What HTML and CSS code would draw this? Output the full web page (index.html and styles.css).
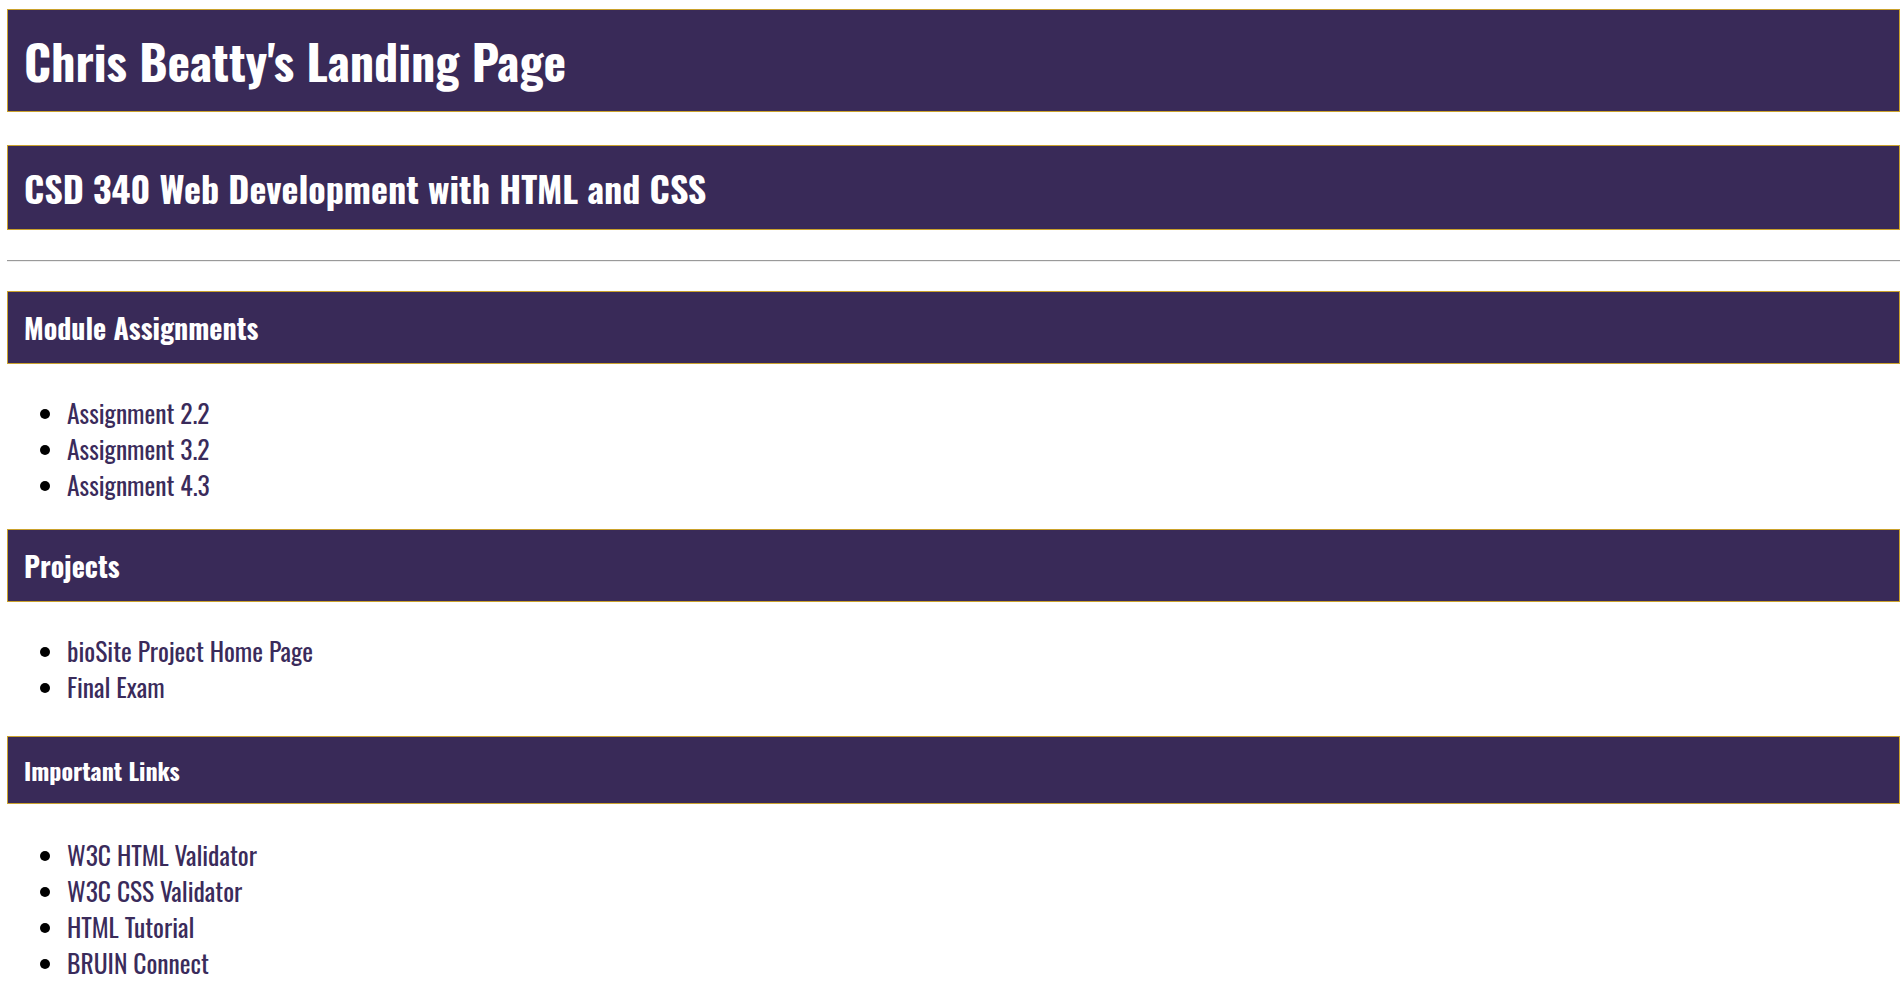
FILE: index.html
```html
<!DOCTYPE html>
<html lang="en">
<head>
<meta charset="utf-8">
<title>Chris Beatty's Landing Page</title>
<link rel="stylesheet" href="styles.css">
</head>
<body>
<header>
  <h1 class="banner banner-xl">Chris Beatty's Landing Page</h1>
  <h2 class="banner banner-lg">CSD 340 Web Development with HTML and CSS</h2>
</header>
<hr class="divider">
<main>
  <section class="group">
    <h3 class="banner banner-md">Module Assignments</h3>
    <ul class="links">
      <li><a href="#">Assignment 2.2</a></li>
      <li><a href="#">Assignment 3.2</a></li>
      <li><a href="#">Assignment 4.3</a></li>
    </ul>
  </section>
  <section class="group">
    <h3 class="banner banner-md">Projects</h3>
    <ul class="links links-mid">
      <li><a href="#">bioSite Project Home Page</a></li>
      <li><a href="#">Final Exam</a></li>
    </ul>
  </section>
  <section class="group">
    <h4 class="banner banner-sm">Important Links</h4>
    <ul class="links links-last">
      <li><a href="#">W3C HTML Validator</a></li>
      <li><a href="#">W3C CSS Validator</a></li>
      <li><a href="#">HTML Tutorial</a></li>
      <li><a href="#">BRUIN Connect</a></li>
    </ul>
  </section>
</main>
</body>
</html>
```
FILE: styles.css
```css
html, body {
  background: #ffffff;
}

body {
  margin: 9px 2px 0 7px;
  font-family: "Oswald", "Open Sans", sans-serif;
  color: #000000;
}

.banner {
  margin: 0;
  background: #392a58;
  color: #ffffff;
  border: 1px solid #caa12c;
  font-weight: 700;
  padding: 15px 16px;
}

.banner-xl {
  font-size: 48px;
  line-height: 71px;
  margin-bottom: 33px;
}

.banner-lg {
  font-size: 36px;
  line-height: 53px;
}

.banner-md {
  font-size: 28px;
  line-height: 41px;
}

.banner-sm {
  font-size: 24px;
  line-height: 36px;
}

.divider {
  margin: 30px 0 29px;
  border: 0;
  border-top: 1px solid #9a9a9a;
  border-bottom: 1px solid #eeeeee;
  height: 0;
}

.links {
  margin: 30px 0 27px;
  padding-left: 60px;
  font-size: 25.6px;
}

.links li {
  line-height: 36px;
}

.links a {
  color: #3a2b5b;
  text-decoration: none;
}

.links-mid {
  margin-bottom: 32px;
}

.links-last {
  margin-top: 32px;
}
```
